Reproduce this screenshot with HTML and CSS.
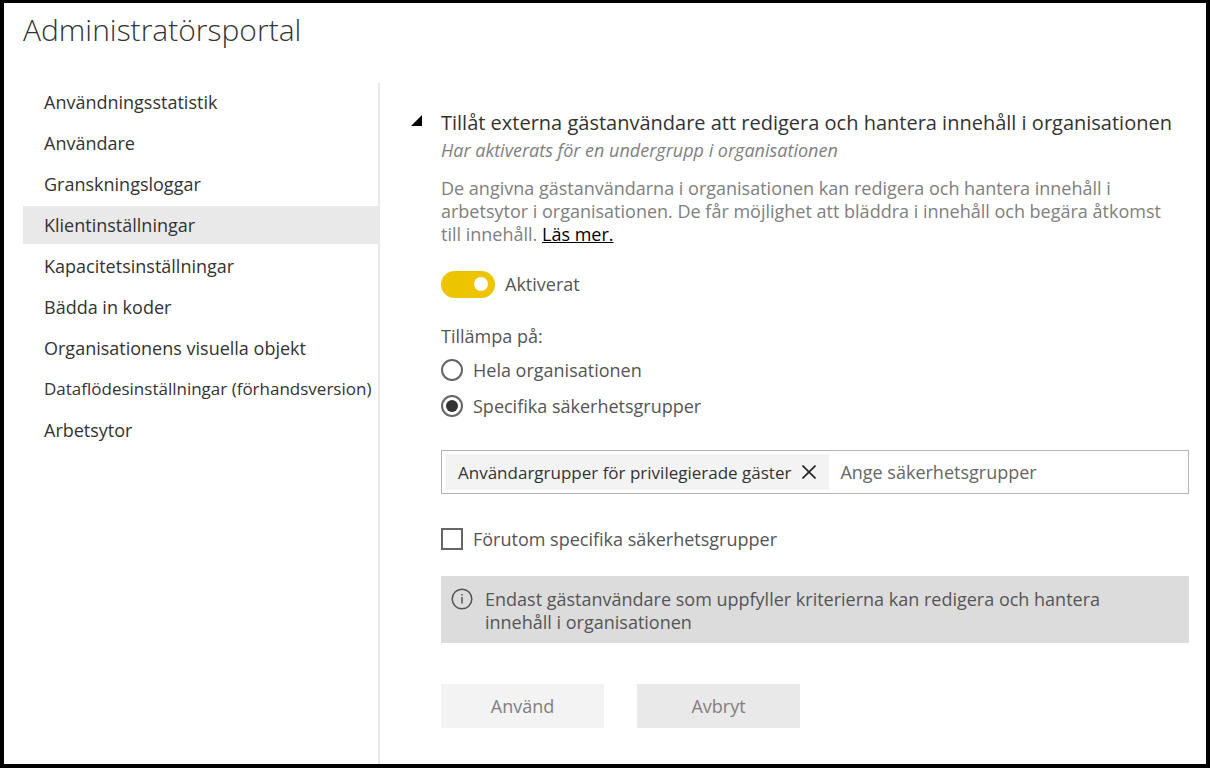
FILE: index.html
```html
<!DOCTYPE html>
<html lang="sv">
<head>
<meta charset="utf-8">
<title>Administratörsportal</title>
<link rel="stylesheet" href="styles.css">
</head>
<body>
<div class="portal">
  <h1 class="title">Administratörsportal</h1>
  <div class="layout">
    <nav class="nav">
      <a class="nav-item" href="#">Användningsstatistik</a>
      <a class="nav-item" href="#">Användare</a>
      <a class="nav-item" href="#">Granskningsloggar</a>
      <a class="nav-item active" href="#" aria-current="page">Klientinställningar</a>
      <a class="nav-item" href="#">Kapacitetsinställningar</a>
      <a class="nav-item" href="#">Bädda in koder</a>
      <a class="nav-item" href="#">Organisationens visuella objekt</a>
      <a class="nav-item compact" href="#">Dataflödesinställningar (förhandsversion)</a>
      <a class="nav-item" href="#">Arbetsytor</a>
    </nav>
    <main class="main">
      <button class="collapse" type="button" aria-label="Dölj" aria-expanded="true">
        <svg class="triangle" viewBox="0 0 11 11"><path d="M11 0V11H0Z"/></svg>
      </button>
      <form class="setting">
        <h2 class="setting-title">Tillåt externa gästanvändare att redigera och hantera innehåll i organisationen</h2>
        <p class="status">Har aktiverats för en undergrupp i organisationen</p>
        <p class="description">De angivna gästanvändarna i organisationen kan redigera och hantera innehåll i arbetsytor i organisationen. De får möjlighet att bläddra i innehåll och begära åtkomst till innehåll. <a class="more" href="#">Läs mer.</a></p>
        <label class="switch-row"><input class="switch" type="checkbox" role="switch" checked><span>Aktiverat</span></label>
        <fieldset class="scope">
          <legend class="legend">Tillämpa på:</legend>
          <label class="option"><input class="radio" type="radio" name="scope"><span>Hela organisationen</span></label>
          <label class="option"><input class="radio" type="radio" name="scope" checked><span>Specifika säkerhetsgrupper</span></label>
        </fieldset>
        <div class="groups">
          <span class="chip"><span>Användargrupper för privilegierade gäster</span>
            <button class="remove" type="button" aria-label="Ta bort"><svg class="cross" viewBox="0 0 14 14"><path d="M0.5 0.5L13.5 13.5M13.5 0.5L0.5 13.5"/></svg></button>
          </span>
          <input class="group-input" type="text" placeholder="Ange säkerhetsgrupper" aria-label="Ange säkerhetsgrupper">
        </div>
        <label class="option"><input class="check" type="checkbox"><span>Förutom specifika säkerhetsgrupper</span></label>
        <div class="notice">
          <svg class="info" viewBox="0 0 22 22"><circle cx="11" cy="11" r="9.8"/><path d="M11 9V15.5M11 6V7.6"/></svg>
          <p class="notice-text">Endast gästanvändare som uppfyller kriterierna kan redigera och hantera innehåll i organisationen</p>
        </div>
        <div class="actions">
          <button class="button apply" type="button">Använd</button>
          <button class="button cancel" type="button">Avbryt</button>
        </div>
      </form>
    </main>
  </div>
</div>
</body>
</html>
```
FILE: styles.css
```css
* { box-sizing: border-box; }
body { margin: 0; background: #fff; }
body, button, input { font-family: "Open Sans", "Noto Sans", sans-serif; font-size: 18px; }
h1, h2, p { margin: 0; }
button { padding: 0; border: 0; background: none; }
.portal {
  display: flex;
  flex-direction: column;
  min-height: 100vh;
  padding-left: 19px;
  border: 4px solid #000;
  border-top-width: 3px;
}
.title {
  height: 80px;
  padding-top: 7px;
  font-size: 30px;
  line-height: 40px;
  font-weight: 300;
  color: #333;
}
.layout { display: flex; flex: 1; }
.nav {
  display: flex;
  flex-direction: column;
  gap: 3px;
  flex: none;
  width: 357px;
  border-right: 2px solid #e9e9e9;
}
.nav-item {
  padding-left: 21px;
  line-height: 38px;
  color: #333;
  text-decoration: none;
  white-space: nowrap;
}
.active { background: #e9e9e9; }
.compact { font-size: 17px; }
.main {
  display: flex;
  align-items: flex-start;
  gap: 19px;
  flex: 1;
  min-width: 0;
  padding: 26px 17px 36px 31px;
}
.collapse { display: flex; padding-top: 6px; }
.triangle { width: 11px; height: 11px; fill: #000; }
.setting { flex: 1; min-width: 0; color: #555; }
.setting-title { font-size: 20px; line-height: 28px; font-weight: 400; color: #333; }
.status { line-height: 26px; font-style: italic; color: #808080; }
.description { margin-top: 14px; padding-right: 20px; line-height: 23px; color: #808080; }
.more { color: #000; }
.switch-row, .option { display: flex; align-items: center; }
.switch-row { gap: 10px; margin-top: 24px; line-height: 28px; }
.option { gap: 10px; line-height: 36px; }
.switch, .radio, .check { appearance: none; flex: none; margin: 0; }
.switch {
  display: flex;
  justify-content: flex-end;
  align-items: center;
  width: 54px;
  height: 27px;
  padding-right: 7px;
  border-radius: 14px;
  background: #ecc500;
}
.switch::before { content: ""; width: 14px; height: 14px; border-radius: 50%; background: #fff; }
.radio, .check { width: 22px; height: 22px; border: 2px solid #666; }
.radio { display: grid; place-items: center; border-radius: 50%; }
.radio:checked::before { content: ""; width: 12px; height: 12px; border-radius: 50%; background: #333; }
.scope { margin: 24px 0 0; padding: 0; border: 0; }
.legend { padding: 0 0 2px; line-height: 28px; }
.groups {
  display: flex;
  align-items: stretch;
  height: 44px;
  margin: 26px 0 27px;
  padding: 3px;
  border: 1px solid #b3b3b3;
}
.chip {
  display: flex;
  align-items: center;
  justify-content: space-between;
  flex: none;
  gap: 11px;
  padding: 0 13px;
  background: #f3f3f3;
  font-size: 17px;
  color: #333;
  white-space: nowrap;
}
.remove, .cross { display: block; }
.cross { width: 14px; height: 14px; fill: none; stroke: #222; stroke-width: 1.6; }
.group-input { flex: 1; min-width: 0; padding: 0 11px; border: 0; outline: 0; background: none; color: #333; }
.group-input::placeholder { color: #666; opacity: 1; }
.notice { display: flex; gap: 12px; margin-top: 19px; padding: 12px 40px 9px 10px; background: #dcdcdc; }
.info { flex: none; width: 22px; height: 22px; fill: none; stroke: #555; stroke-width: 1.5; }
.notice-text { line-height: 23px; color: #555; }
.actions { display: flex; gap: 33px; margin-top: 41px; }
.button { width: 163px; height: 44px; color: #808080; }
.apply { background: #f3f3f3; }
.cancel { background: #e9e9e9; }
```
